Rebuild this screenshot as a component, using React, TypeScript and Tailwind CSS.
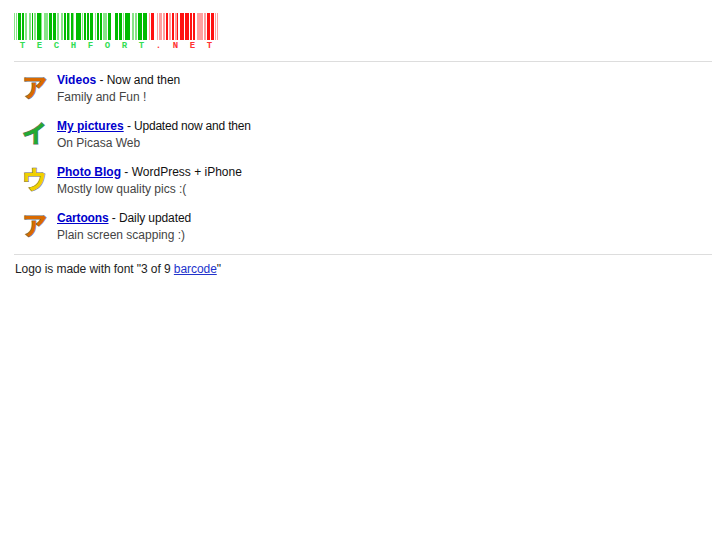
const green = [
  'l.l.ddd.dd.ll',
  'll.d.ll.ddddl',
  'llll.ddd.ddd.ll',
  'll.dd.ddl.ddl',
  'ddddd.l.dd.dd.ddd',
  'l.dd.dd.llll.ddd..',
  'ddd.ddd.l.ddddd',
  'll.ll.dddd.dddd',
]
const red = [
  'l.ddd.',
  'l.lll.ll.dd.ll.dd.lld',
  'dddd.dddd.dd.dd',
  'llllll.ll.ddd.ddd.l.l',
]

function Barcode({ groups, dark, light }: { groups: string[]; dark: string; light: string }) {
  return (
    <>
      {groups.map((g, i) => (
        <div key={i} className="flex h-full mr-[2px]">
          {g.split('').map((c, j) => (
            <span
              key={j}
              className="w-[1px] h-full"
              style={{ background: c === 'd' ? dark : c === 'l' ? light : '#fff' }}
            />
          ))}
        </div>
      ))}
    </>
  )
}

function Caption() {
  const letters = 'TECHFORT.NET'.split('')
  return (
    <div className="flex mt-[1px] font-['Liberation_Mono',monospace] text-[9px] font-bold leading-[10px]">
      {letters.map((l, i) => (
        <span key={i} className={`w-[17px] text-center ${i < 8 ? 'text-[#33dd55]' : 'text-[#ff3333]'}`}>
          {l}
        </span>
      ))}
    </div>
  )
}

interface RowProps {
  kana: string
  color: string
  title: string
  titleClass?: string
  underline?: boolean
  tail: string
  tailClass?: string
  sub: string
}

function Row({ kana, color, title, titleClass, underline, tail, tailClass, sub }: RowProps) {
  return (
    <div className="flex">
      <div className="w-[43px] h-[33px] flex items-center justify-center">
        <span
          className={`font-['Noto_Sans_CJK_JP',sans-serif] text-[25px] font-bold leading-none -translate-y-[2px] -translate-x-[1px] [-webkit-text-stroke:1px_#666] [paint-order:stroke_fill] ${color}`}
        >
          {kana}
        </span>
      </div>
      <div className="leading-[16.8px]">
        <div className="text-[#111]">
          <a href="#" className={`font-bold text-[#0000cc] ${underline ? 'underline' : ''} ${titleClass ?? ''}`}>
            {title}
          </a>{' '}
          <span className={tailClass}>- {tail}</span>
        </div>
        <div className="text-[#444]">{sub}</div>
      </div>
    </div>
  )
}

export default function App() {
  return (
    <div className="min-h-[545px] bg-white font-['Liberation_Sans',Arial,sans-serif] text-[12px] pl-[14px] pr-[15px] pt-[13px]">
      <div className="flex h-[27px] overflow-hidden">
        <Barcode groups={green} dark="#00bb00" light="#88e488" />
        <Barcode groups={red} dark="#ff1111" light="#ffa0a0" />
      </div>
      <Caption />
      <hr className="mt-[10px] border-t border-[#ddd]" />
      <div className="flex flex-col gap-[12.2px] mt-[10.4px]">
        <Row kana="ア" color="text-[#d96a00]" title="Videos" tail="Now and then" tailClass="tracking-[-0.05px]" sub="Family and Fun !" />
        <Row kana="イ" color="text-[#22aa33]" title="My pictures" underline tail="Updated now and then" tailClass="tracking-[-0.2px]" sub="On Picasa Web" />
        <Row kana="ウ" color="text-[#f0d000]" title="Photo Blog" underline tail="WordPress + iPhone" sub="Mostly low quality pics :(" />
        <Row kana="ア" color="text-[#d96a00]" title="Cartoons" titleClass="tracking-[-0.15px]" underline tail="Daily updated" tailClass="tracking-[-0.1px]" sub="Plain screen scapping :)" />
      </div>
      <hr className="mt-[11px] border-t border-[#ddd]" />
      <p className="mt-[6px] pl-[1px] leading-[17px] text-[#222] tracking-[-0.07px]">
        Logo is made with font "3 of 9{' '}
        <a href="#" className="underline text-[#2233cc]">barcode</a>"
      </p>
    </div>
  )
}
